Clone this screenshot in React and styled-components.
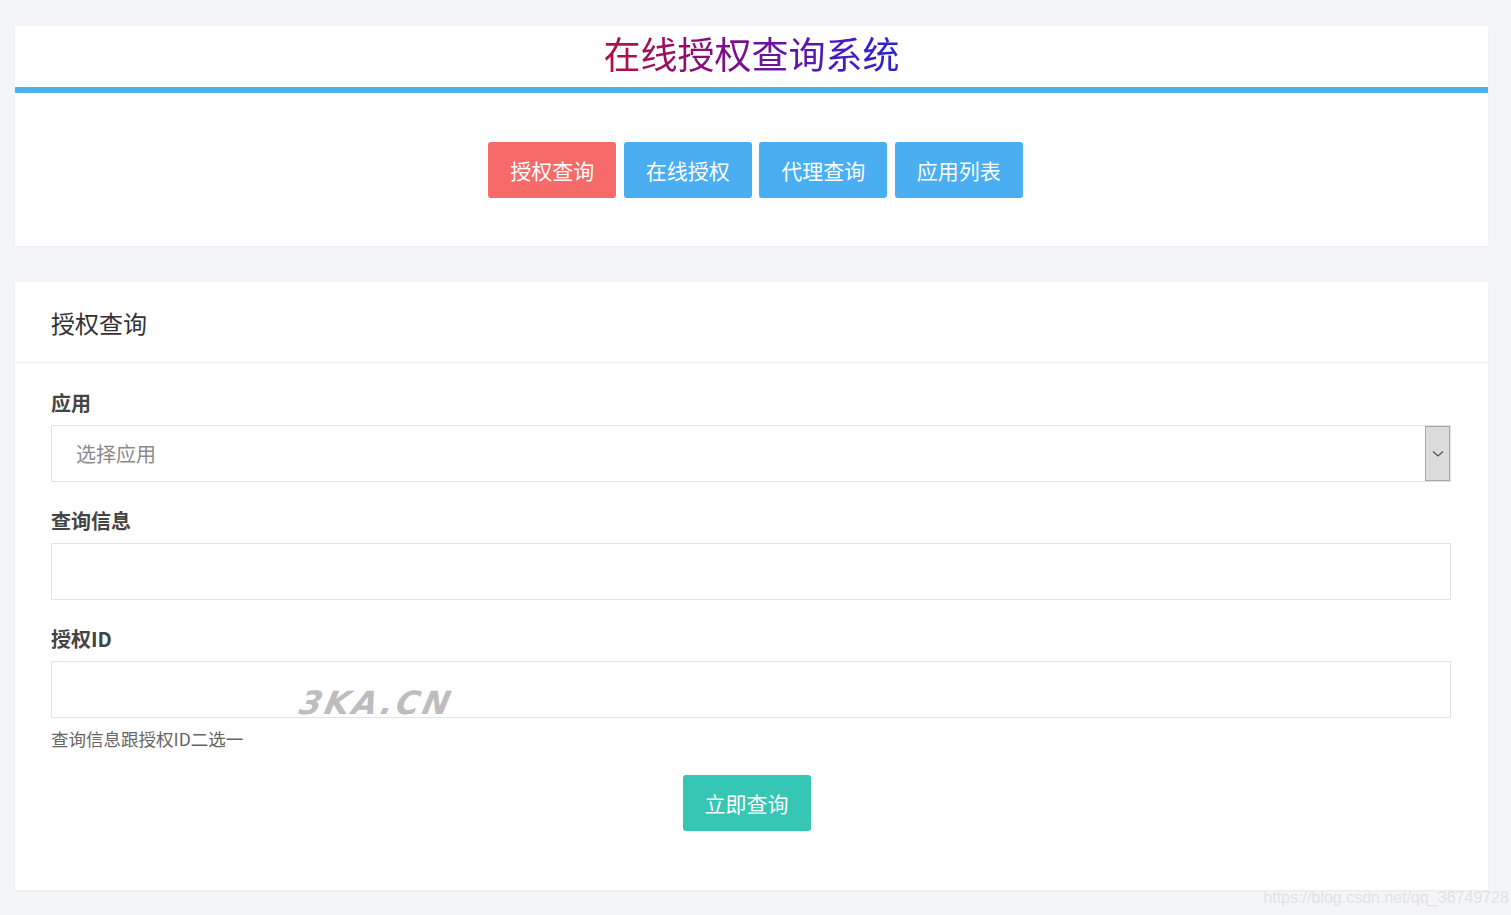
import React from 'react';
import styled, { createGlobalStyle } from 'styled-components';

const GlobalStyle = createGlobalStyle`
  body {
    margin: 0;
    background: #f3f5f9;
    font-family: "Noto Sans CJK SC", "Noto Sans", sans-serif;
  }
`;

const Page = styled.div`
  padding: 26px 23px 24px 15px;
  display: flex;
  flex-direction: column;
  gap: 36px;
  position: relative;
  min-height: 865px;
  overflow: hidden;
`;

const Card = styled.div`
  background: #fff;
  box-shadow: 0 1px 2px rgba(0, 0, 0, 0.05);
`;

const TitleBar = styled.div`
  height: 67px;
  box-sizing: border-box;
  padding-bottom: 7px;
  display: flex;
  justify-content: center;
  align-items: center;
  border-bottom: 6px solid #4ab0ee;
`;

const Title = styled.h1`
  margin: 0;
  font-size: 37px;
  font-weight: 400;
  line-height: 1;
  background: linear-gradient(90deg, #b5103c 0%, #7a0f8f 45%, #2a22d6 100%);
  -webkit-background-clip: text;
  background-clip: text;
  color: transparent;
`;

const NavRow = styled.div`
  display: flex;
  justify-content: center;
  gap: 7.5px;
  padding: 49px 0 48px 8px;
`;

const Button = styled.button`
  width: 128px;
  height: 56px;
  border: none;
  border-radius: 3px;
  color: #fff;
  font-family: inherit;
  font-size: 21px;
  background: ${(p) => p.$bg};
  cursor: pointer;
`;

const CardHeader = styled.div`
  height: 80px;
  padding: 0 36px;
  display: flex;
  align-items: center;
  font-size: 24px;
  color: #333;
  border-bottom: 1px solid #eef0f3;
`;

const Form = styled.div`
  padding: 25px 37px 59px 36px;
  display: flex;
  flex-direction: column;
`;

const Label = styled.label`
  font-size: 20px;
  font-weight: 700;
  color: #444;
  line-height: 30px;
  margin-bottom: 7px;
`;

const Field = styled.div`
  position: relative;
  height: 57px;
  border: 1px solid #e1e3e6;
  box-sizing: border-box;
  display: flex;
  align-items: center;
  margin-bottom: ${(p) => p.$mb ?? 24}px;
`;

const Placeholder = styled.span`
  padding-left: 24px;
  font-size: 20px;
  color: #8a8a8a;
  flex: 1;
`;

const Arrow = styled.div`
  width: 25px;
  height: 55px;
  background: #dcdcdc;
  border: 1px solid #a8a8a8;
  box-sizing: border-box;
  display: flex;
  align-items: center;
  justify-content: center;
`;

const Help = styled.div`
  font-size: 17.5px;
  color: #666;
  margin-top: 8px;
`;

const Submit = styled.div`
  display: flex;
  justify-content: center;
  margin-top: 24px;
  padding-right: 9px;
`;

const Watermark = styled.span`
  position: absolute;
  left: 248px;
  top: 22px;
  font-family: "DejaVu Sans", sans-serif;
  font-weight: 900;
  font-style: italic;
  font-size: 32px;
  letter-spacing: 3px;
  color: #bdbdbd;
  transform: skewX(-12deg);
`;

const CornerMark = styled.span`
  position: absolute;
  right: 2px;
  bottom: 8px;
  font-family: "Liberation Sans", sans-serif;
  font-size: 16px;
  color: #e2e2e2;
`;

export default function App() {
  return (
    <>
      <GlobalStyle />
      <Page>
        <Card>
          <TitleBar>
            <Title>在线授权查询系统</Title>
          </TitleBar>
          <NavRow>
            <Button $bg="#f76a6a">授权查询</Button>
            <Button $bg="#49aef2">在线授权</Button>
            <Button $bg="#49aef2">代理查询</Button>
            <Button $bg="#49aef2">应用列表</Button>
          </NavRow>
        </Card>
        <Card>
          <CardHeader>授权查询</CardHeader>
          <Form>
            <Label>应用</Label>
            <Field>
              <Placeholder>选择应用</Placeholder>
              <Arrow>
                <svg width="12" height="8" viewBox="0 0 12 8">
                  <path d="M1 1.5 L6 6 L11 1.5" fill="none" stroke="#555" strokeWidth="1.3" />
                </svg>
              </Arrow>
            </Field>
            <Label>查询信息</Label>
            <Field />
            <Label>授权ID</Label>
            <Field $mb={0}>
              <Watermark>3KA.CN</Watermark>
            </Field>
            <Help>查询信息跟授权ID二选一</Help>
            <Submit>
              <Button $bg="#35c6b4">立即查询</Button>
            </Submit>
          </Form>
        </Card>
        <CornerMark>https://blog.csdn.net/qq_36749728</CornerMark>
      </Page>
    </>
  );
}
